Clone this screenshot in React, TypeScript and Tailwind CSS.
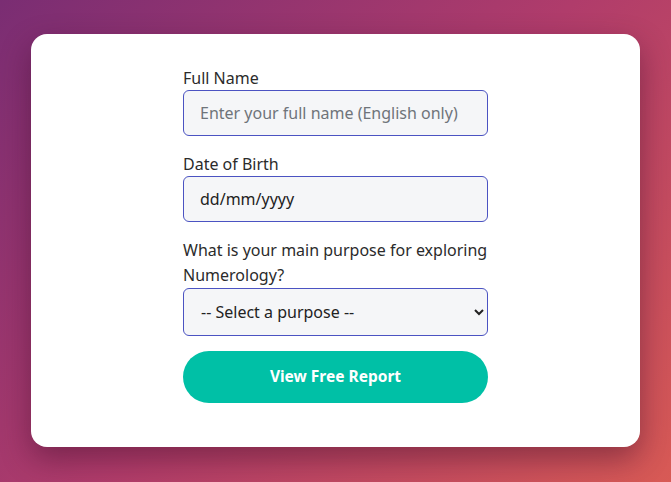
import React, { useState } from "react";

const purposes = [
  "Self-discovery",
  "Career guidance",
  "Love & relationships",
  "Life path insight",
];

export default function App() {
  const [name, setName] = useState("");
  const [dob, setDob] = useState("");
  const [purpose, setPurpose] = useState("");

  return (
    <div
      className="min-h-[482px] w-full bg-[linear-gradient(135deg,#7a2d73_0%,#b03c6b_50%,#d85a55_100%)] px-[31px] pt-[34px] pb-[35px]"
      style={{ fontFamily: '"Noto Sans", "Open Sans", sans-serif' }}
    >
      <div className="rounded-2xl bg-white pt-8 pb-[44px] shadow-[0_12px_30px_rgba(60,10,40,0.45)]">
        <form
          className="mx-auto flex w-[305px] flex-col"
          onSubmit={(e) => e.preventDefault()}
        >
          <label className="text-[16px] leading-6 text-[#2b2b2b]">Full Name</label>
          <input
            className="h-[46px] rounded-md border border-[#4b53c2] bg-[#f5f6f8] px-4 text-[16px] text-[#222] outline-none placeholder:text-[#6f747a]"
            placeholder="Enter your full name (English only)"
            value={name}
            onChange={(e) => setName(e.target.value)}
          />

          <label className="mt-4 text-[16px] leading-6 text-[#2b2b2b]">Date of Birth</label>
          <input
            className="h-[46px] rounded-md border border-[#4b53c2] bg-[#f5f6f8] px-4 text-[16px] text-[#222] outline-none placeholder:text-[#222]"
            placeholder="dd/mm/yyyy"
            value={dob}
            onChange={(e) => setDob(e.target.value)}
          />

          <label className="mt-4 text-[16px] leading-[25px] text-[#2b2b2b]">
            What is your main purpose for exploring Numerology?
          </label>
          <select
            className="h-[48px] rounded-md border border-[#4b53c2] bg-[#f5f6f8] pl-[13px] pr-2 text-[16px] text-[#222] outline-none"
            value={purpose}
            onChange={(e) => setPurpose(e.target.value)}
          >
            <option value="">-- Select a purpose --</option>
            {purposes.map((p) => (
              <option key={p} value={p}>
                {p}
              </option>
            ))}
          </select>

          <button
            type="submit"
            className="mt-[15px] h-[52px] rounded-full bg-[#00c0a6] text-[15.5px] font-bold text-white"
          >
            View Free Report
          </button>
        </form>
      </div>
    </div>
  );
}
